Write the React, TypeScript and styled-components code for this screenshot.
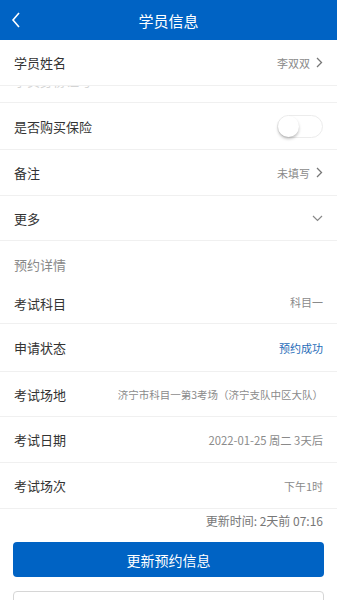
import React from "react";
import styled, { createGlobalStyle } from "styled-components";

const GlobalStyle = createGlobalStyle`
  html, body {
    margin: 0;
    padding: 0;
    background: #ffffff;
    font-family: "Noto Sans CJK SC", "Noto Sans", sans-serif;
  }
  * { box-sizing: border-box; }
`;

const Page = styled.div`
  width: 337px;
  height: 600px;
  overflow: hidden;
  background: #fff;
`;

const Header = styled.div`
  height: 40px;
  background: #0063c4;
  display: flex;
  align-items: center;
  justify-content: center;
  position: relative;
  color: #fff;
  font-size: 15px;
`;

const Back = styled.svg`
  position: absolute;
  left: 11px;
  top: 12px;
`;

const Row = styled.div<{ $h?: number; $top?: boolean }>`
  height: ${(p) => p.$h ?? 46}px;
  display: flex;
  align-items: ${(p) => (p.$top ? "flex-start" : "center")};
  justify-content: space-between;
  padding: ${(p) => (p.$top ? "7px" : "0")} 14px 0 14px;
  border-bottom: 1px solid #f0f0f0;
`;

const Label = styled.span`
  font-size: 13px;
  color: #333;
`;

const Value = styled.span<{ $blue?: boolean; $size?: number }>`
  font-size: ${(p) => p.$size ?? 11}px;
  color: ${(p) => (p.$blue ? "#1f6cb8" : "#8a8a8a")};
  display: flex;
  align-items: center;
  gap: 6px;
`;

const Clipped = styled.div`
  height: 17px;
  overflow: hidden;
  border-bottom: 1px solid #f0f0f0;
  padding: 0 14px;
`;

const ClippedText = styled.div`
  margin-top: -12px;
  font-size: 13px;
  color: #d4d4d4;
  line-height: 13px;
`;

const Toggle = styled.div`
  width: 46px;
  height: 23px;
  border-radius: 12px;
  border: 1px solid #ececec;
  background: #fff;
  position: relative;
`;

const Knob = styled.div`
  position: absolute;
  left: 0;
  top: 0;
  width: 21px;
  height: 21px;
  border-radius: 50%;
  background: #fff;
  box-shadow: 0 2px 3px rgba(0, 0, 0, 0.25);
`;

const SectionTitle = styled.div`
  height: 46px;
  padding: 0 14px;
  display: flex;
  align-items: center;
  font-size: 13px;
  color: #888;
`;

const UpdateTime = styled.div`
  text-align: right;
  padding: 3px 14px 0 0;
  font-size: 12px;
  color: #777;
  height: 33px;
`;

const PrimaryButton = styled.div`
  margin: 0 13px;
  height: 35px;
  border-radius: 4px;
  background: #0063c4;
  color: #fff;
  font-size: 14px;
  display: flex;
  align-items: center;
  justify-content: center;
`;

const OutlineButton = styled.div`
  margin: 14px 13px 0;
  height: 35px;
  border-radius: 4px;
  border: 1px solid #d6d6d6;
  background: #fff;
`;

const ChevronRight = () => (
  <svg width="7" height="11" viewBox="0 0 7 11">
    <path d="M1 1l4.5 4.5L1 10" fill="none" stroke="#777" strokeWidth="1.3" />
  </svg>
);

const ChevronDown = () => (
  <svg width="11" height="7" viewBox="0 0 11 7">
    <path d="M1 1l4.5 4.5L10 1" fill="none" stroke="#888" strokeWidth="1.2" />
  </svg>
);

const details: { label: string; value: string; h: number; blue?: boolean; size?: number }[] = [
  { label: "申请状态", value: "预约成功", h: 48, blue: true },
  { label: "考试场地", value: "济宁市科目一第3考场（济宁支队中区大队）", h: 45, size: 10.5 },
  { label: "考试日期", value: "2022-01-25 周二 3天后", h: 46, size: 11.3 },
  { label: "考试场次", value: "下午1时", h: 46 },
];

export default function App() {
  return (
    <Page>
      <GlobalStyle />
      <Header>
        <Back width="10" height="16" viewBox="0 0 10 16">
          <path d="M8 1L2 8l6 7" fill="none" stroke="#fff" strokeWidth="1.6" />
        </Back>
        学员信息
      </Header>
      <Row>
        <Label>学员姓名</Label>
        <Value>
          李双双 <ChevronRight />
        </Value>
      </Row>
      <Clipped>
        <ClippedText>学员身份证号</ClippedText>
      </Clipped>
      <Row $h={47}>
        <Label>是否购买保险</Label>
        <Toggle>
          <Knob />
        </Toggle>
      </Row>
      <Row>
        <Label>备注</Label>
        <Value>
          未填写 <ChevronRight />
        </Value>
      </Row>
      <Row $h={45}>
        <Label>更多</Label>
        <ChevronDown />
      </Row>
      <SectionTitle>预约详情</SectionTitle>
      <Row $h={37} $top>
        <Label>考试科目</Label>
        <Value>科目一</Value>
      </Row>
      {details.map((d) => (
        <Row key={d.label} $h={d.h}>
          <Label>{d.label}</Label>
          <Value $blue={d.blue} $size={d.size}>
            {d.value}
          </Value>
        </Row>
      ))}
      <UpdateTime>更新时间: 2天前 07:16</UpdateTime>
      <PrimaryButton>更新预约信息</PrimaryButton>
      <OutlineButton />
    </Page>
  );
}
